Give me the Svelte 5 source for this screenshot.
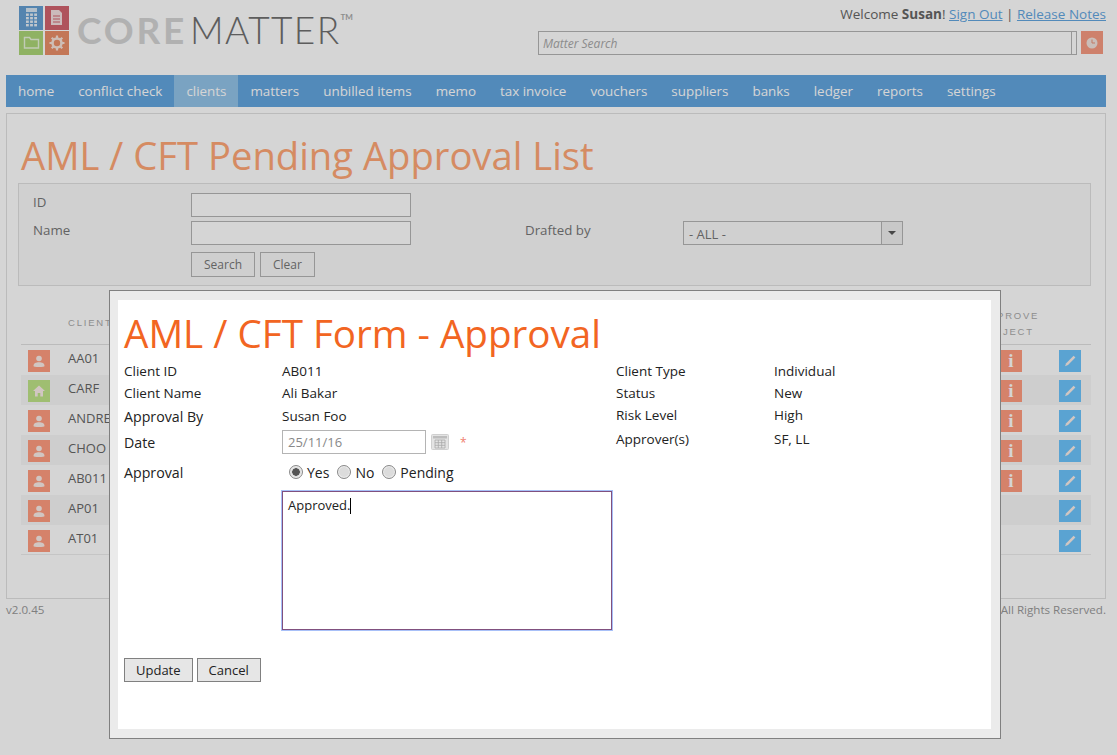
<script lang="ts">
  const navItems = ['home', 'conflict check', 'clients', 'matters', 'unbilled items', 'memo', 'tax invoice', 'vouchers', 'suppliers', 'banks', 'ledger', 'reports', 'settings']

  const clients = [
    { id: 'AA01', kind: 'person', info: true },
    { id: 'CARF', kind: 'company', info: true },
    { id: 'ANDREW', kind: 'person', info: true },
    { id: 'CHOO', kind: 'person', info: true },
    { id: 'AB011', kind: 'person', info: true },
    { id: 'AP01', kind: 'person', info: false },
    { id: 'AT01', kind: 'person', info: false }
  ]

  const approval = ['Yes', 'No', 'Pending']
</script>

<div class="page">
  <header class="top">
    <div class="logo">
      <svg class="logo-mark" width="50" height="49" viewBox="0 0 50 49" aria-hidden="true">
        <rect x="0" y="0" width="24" height="24" fill="#659fd2" />
        <rect x="7" y="2" width="11" height="4" fill="#d8e6f2" />
        <g fill="#e8eff6">
          <rect x="7" y="7.500" width="2.800" height="2.400" /><rect x="11.100" y="7.500" width="2.800" height="2.400" /><rect x="15.200" y="7.500" width="2.800" height="2.400" />
          <rect x="7" y="11" width="2.800" height="2.400" /><rect x="11.100" y="11" width="2.800" height="2.400" /><rect x="15.200" y="11" width="2.800" height="2.400" />
          <rect x="7" y="14.500" width="2.800" height="2.400" /><rect x="11.100" y="14.500" width="2.800" height="2.400" /><rect x="15.200" y="14.500" width="2.800" height="2.400" />
          <rect x="7" y="18" width="2.800" height="2.400" /><rect x="11.100" y="18" width="2.800" height="2.400" /><rect x="15.200" y="18" width="2.800" height="2.400" />
        </g>
        <rect x="26" y="0" width="24" height="24" fill="#d2646f" />
        <path d="M32 4h8l3 3v12H32z" fill="#f3dfe0" />
        <path d="M34 10h7M34 13h7M34 16h7" stroke="#d2646f" stroke-width="1.2" />
        <rect x="0" y="25" width="24" height="24" fill="#acd577" />
        <path d="M5.500 31.500h5l1.500 2h7.500v8.500h-14z" fill="none" stroke="#e8f3da" stroke-width="1.400" />
        <rect x="26" y="25" width="24" height="24" fill="#ea8f69" />
        <circle cx="38" cy="37" r="4.500" fill="none" stroke="#f7e4da" stroke-width="2.600" />
        <path d="M38 29.500v3M38 41.500v3M30.500 37h3M42.500 37h3M32.700 31.700l2.100 2.100M41.200 40.200l2.100 2.100M32.700 42.300l2.100-2.100M41.200 33.800l2.100-2.100" stroke="#f7e4da" stroke-width="2.200" />
      </svg>
      <div class="wordmark"><span class="core">CORE</span><span class="matter">MATTER</span><sup>TM</sup></div>
    </div>
    <div class="account">
      <div class="welcome">Welcome <b>Susan</b>! <a href="#signout">Sign Out</a> | <a href="#notes">Release Notes</a></div>
      <div class="search-row">
        <div class="matter-search">
          <input placeholder="Matter Search" />
          <span class="search-end"></span>
        </div>
        <button class="clock" aria-label="Recent matters">
          <svg width="12" height="12" viewBox="0 0 12 12"><circle cx="6" cy="6" r="5.500" fill="#f2e4de" /><path d="M6 2.500V6h3" fill="none" stroke="#e79178" stroke-width="1" /></svg>
        </button>
      </div>
    </div>
  </header>

  <nav class="nav">
    {#each navItems as item}
      <a href="#{item}" class:active={item === 'clients'}>{item}</a>
    {/each}
  </nav>

  <main class="panel">
    <h1>AML / CFT Pending Approval List</h1>
    <form class="filters">
      <div class="filter-grid">
        <label class="lbl-id" for="f-id">ID</label>
        <input id="f-id" class="txt" />
        <span></span><span></span><span></span>
        <label class="lbl-name" for="f-name">Name</label>
        <input id="f-name" class="txt" />
        <span></span>
        <label class="lbl-name" for="f-drafted">Drafted by</label>
        <div class="select" id="f-drafted">
          <span class="select-value">- ALL -</span>
          <span class="select-arrow"><i></i></span>
        </div>
      </div>
      <div class="filter-actions">
        <button type="button" class="btn">Search</button>
        <button type="button" class="btn">Clear</button>
      </div>
    </form>

    <div class="table">
      <div class="thead">
        <span class="col-client">CLIENT ID</span>
        <span class="col-approve">APPROVE<br />REJECT</span>
      </div>
      {#each clients as c, i}
        <div class="row" class:striped={i % 2 === 1}>
          <span class="tile" class:company={c.kind === 'company'}>
            {#if c.kind === 'person'}
              <svg width="14" height="14" viewBox="0 0 14 14"><circle cx="7" cy="4.500" r="2.800" /><path d="M1.500 12c0-3 2.500-3.800 5.500-3.800s5.500.8 5.500 3.800c0 .6-2 1-5.500 1s-5.500-.4-5.500-1z" /></svg>
            {:else}
              <svg width="14" height="14" viewBox="0 0 14 14"><path d="M7 1.500 13 7h-2v5.500H8.300V9H5.700v3.500H3V7H1z" /></svg>
            {/if}
          </span>
          <span class="client-id">{c.id}</span>
          <span class="cell-info">
            {#if c.info}
              <span class="tile info">i</span>
            {/if}
          </span>
          <span class="tile edit">
            <svg width="14" height="14" viewBox="0 0 14 14"><path d="M10.600 1.800 12.400 3.600 5 11 2 12.200 3.200 9.200z" /></svg>
          </span>
        </div>
      {/each}
    </div>
  </main>

  <footer class="foot">
    <span>v2.0.45</span>
    <span>Copyright &copy; 2016 CoreMatter. All Rights Reserved.</span>
  </footer>
</div>

<div class="overlay"></div>

<div class="dialog" role="dialog" aria-label="AML / CFT Form - Approval">
  <div class="dialog-body">
    <h2>AML / CFT Form - Approval</h2>
    <div class="form-cols">
      <div class="form-left">
        <div class="f-row r1"><span class="f-label">Client ID</span><span>AB011</span></div>
        <div class="f-row r2"><span class="f-label">Client Name</span><span>Ali Bakar</span></div>
        <div class="f-row r3"><span class="f-label big">Approval By</span><span>Susan Foo</span></div>
        <div class="f-row r4">
          <span class="f-label big">Date</span>
          <div class="date-wrap">
            <input class="date" value="25/11/16" />
            <svg class="cal" width="18" height="16" viewBox="0 0 18 16" aria-hidden="true">
              <rect x="0.500" y="0.500" width="17" height="15" rx="1" fill="#e4e4e4" stroke="#d0d0d0" />
              <rect x="2" y="2" width="14" height="2.500" fill="#bdbdbd" />
              <path d="M4 6h10v8H4zM4 8.700h10M4 11.300h10M7.300 6v8M10.700 6v8" fill="none" stroke="#a8a8a8" stroke-width="0.800" />
            </svg>
            <span class="req">*</span>
          </div>
        </div>
        <div class="f-row r5">
          <span class="f-label big">Approval</span>
          <div class="radios">
            {#each approval as a, i}
              <label><input type="radio" name="approval" checked={i === 0} />{a}</label>
            {/each}
          </div>
        </div>
        <div class="f-row r6">
          <span></span>
          <div class="notes" role="textbox">Approved.<span class="caret"></span></div>
        </div>
      </div>
      <div class="form-right">
        <div class="g-row"><span class="f-label">Client Type</span><span>Individual</span></div>
        <div class="g-row"><span class="f-label">Status</span><span>New</span></div>
        <div class="g-row"><span class="f-label">Risk Level</span><span>High</span></div>
        <div class="g-row"><span class="f-label">Approver(s)</span><span>SF, LL</span></div>
      </div>
    </div>
    <div class="dialog-actions">
      <button class="dlg-btn">Update</button>
      <button class="dlg-btn">Cancel</button>
    </div>
  </div>
</div>

<style>
  :global(body) {
    margin: 0;
    background: #fff;
    font-family: 'Open Sans', 'Liberation Sans', sans-serif;
    font-size: 13px;
    color: #555;
  }

  .page {
    width: 1117px;
    height: 755px;
    box-sizing: border-box;
    padding: 0 11px 0 6px;
    overflow: hidden;
  }

  .top {
    display: flex;
    justify-content: space-between;
    height: 75px;
  }

  .logo {
    display: flex;
    align-items: flex-start;
    gap: 8px;
    padding: 6px 0 0 13px;
  }

  .logo-mark {
    display: block;
  }

  .wordmark {
    display: flex;
    align-items: flex-start;
    margin-top: 2px;
    font-family: Lato, 'Open Sans', sans-serif;
    font-size: 37px;
    line-height: 44px;
    letter-spacing: 2.800px;
  }

  .core {
    font-weight: 700;
    color: #d4d4d4;
    margin-right: 3px;
  }

  .matter {
    font-weight: 300;
    color: #707070;
    letter-spacing: 1.400px;
  }

  sup {
    font-size: 8px;
    line-height: 10px;
    letter-spacing: 0;
    margin: 4px 0 0 0;
    color: #aaa;
    font-weight: 700;
  }

  .account {
    display: flex;
    flex-direction: column;
    align-items: flex-end;
  }

  .welcome {
    height: 31px;
    line-height: 28px;
    font-size: 13.500px;
    color: #666;
    white-space: nowrap;
  }

  .welcome a {
    color: #63a6df;
  }

  .search-row {
    display: flex;
    gap: 4px;
    margin-right: 3px;
  }

  .matter-search {
    display: flex;
    width: 539px;
    height: 24px;
    box-sizing: border-box;
    border: 1px solid #b4b4b4;
  }

  .matter-search input {
    flex: 1;
    min-width: 0;
    border: 0;
    padding: 1px 4px 0;
    background: transparent;
    font: italic 12px 'Open Sans', sans-serif;
    color: #777;
    outline: none;
  }

  .matter-search input::placeholder {
    color: #a8a8a8;
    opacity: 1;
  }

  .search-end {
    width: 4px;
    border-left: 1px solid #b4b4b4;
  }

  .clock {
    width: 22px;
    height: 23px;
    border: 0;
    padding: 0;
    background: #f79b82;
    display: flex;
    align-items: center;
    justify-content: center;
  }

  .nav {
    display: flex;
    height: 32px;
    background: #63a6df;
    font-size: 13.400px;
  }

  .nav a {
    padding: 0 12px;
    line-height: 32px;
    color: #fff;
    text-decoration: none;
    white-space: nowrap;
  }

  .nav a.active {
    background: #93c3e9;
  }

  .panel {
    margin-top: 6px;
    height: 486px;
    box-sizing: border-box;
    border: 1px solid #e0e0e0;
    padding: 0 14px 0 11px;
    background: #fff;
  }

  h1 {
    margin: 13px 0 0 3px;
    height: 56px;
    font-size: 38.200px;
    line-height: 56px;
    font-weight: 400;
    color: #ffa776;
    white-space: nowrap;
  }

  .filters {
    height: 103px;
    box-sizing: border-box;
    border: 1px solid #e0e0e0;
    background: #fafafa;
    padding: 9px 14px;
  }

  .filter-grid {
    display: grid;
    grid-template-columns: 158px 220px 114px 158px 220px;
    grid-auto-rows: 24px;
    row-gap: 4px;
    align-items: center;
  }

  .filter-grid label {
    color: #777;
    font-size: 13.300px;
    margin-top: -6px;
  }

  .txt {
    height: 24px;
    box-sizing: border-box;
    border: 1px solid #b4b4b4;
    background: #fff;
    padding: 0 4px;
  }

  .select {
    display: flex;
    height: 24px;
    box-sizing: border-box;
    border: 1px solid #b4b4b4;
    color: #777;
    line-height: 24px;
  }

  .select-value {
    flex: 1;
    padding-left: 5px;
  }

  .select-arrow {
    width: 20px;
    background: #f0f0f0;
    border-left: 1px solid #b4b4b4;
    display: flex;
    align-items: center;
    justify-content: center;
  }

  .select-arrow i {
    border: 4px solid transparent;
    border-top: 4px solid #555;
    border-bottom: 0;
  }

  .filter-actions {
    display: flex;
    gap: 5px;
    margin: 7px 0 0 158px;
  }

  .btn {
    height: 25px;
    padding: 0 12px;
    border: 1px solid #b4b4b4;
    background: #f8f8f8;
    font: 12px 'Open Sans', sans-serif;
    color: #777;
  }

  .table {
    margin: 15px 0 0 3px;
    width: 1070px;
  }

  .thead {
    display: flex;
    height: 44px;
    box-sizing: border-box;
    border-bottom: 1px solid #e0e0e0;
    font: 9.500px 'Liberation Sans', sans-serif;
    letter-spacing: 1.800px;
    color: #aaa;
    line-height: 16px;
  }

  .col-client {
    margin: 14px 0 0 47px;
  }

  .col-approve {
    margin: 7px 46px 0 auto;
    width: 70px;
    text-align: center;
  }

  .row {
    display: flex;
    align-items: flex-start;
    height: 30px;
    box-sizing: border-box;
    border-bottom: 1px solid transparent;
    padding: 5px 0 0 7px;
    font-size: 13px;
    color: #666;
  }

  .row:last-child {
    border-bottom-color: #ececec;
  }

  .striped {
    background: #f7f7f7;
  }

  .tile {
    width: 22px;
    height: 22px;
    flex: none;
    display: flex;
    align-items: center;
    justify-content: center;
    background: #ff9c7f;
    color: #fff;
  }

  .tile svg {
    fill: #fbeee9;
  }

  .tile.company {
    background: #bfe488;
  }

  .client-id {
    margin-left: 18px;
    margin-top: -1px;
    flex: 1;
  }

  .cell-info {
    width: 59px;
    height: 22px;
    flex: none;
  }

  .info {
    font: 700 19px 'Liberation Serif', serif;
  }

  .tile.edit {
    background: #6cc4fc;
    margin-right: 10px;
  }

  .foot {
    display: flex;
    justify-content: space-between;
    margin-top: 3px;
    font-size: 11.600px;
    color: #999;
  }

  .overlay {
    position: fixed;
    inset: 0;
    background: rgba(0, 0, 0, 0.165);
  }

  .dialog {
    position: fixed;
    left: 109px;
    top: 290px;
    width: 892px;
    height: 449px;
    box-sizing: border-box;
    padding: 9px 9px 9px 8px;
    border: 1px solid #808080;
    background: #ebebeb;
  }

  .dialog-body {
    height: 100%;
    box-sizing: border-box;
    padding: 10px 5px 0 6px;
    background: #fff;
    color: #222;
    font-size: 13.500px;
  }

  h2 {
    margin: 0;
    height: 50px;
    font-size: 38.600px;
    line-height: 46px;
    font-weight: 400;
    color: #f26522;
    white-space: nowrap;
  }

  .form-cols {
    display: flex;
    height: 298px;
  }

  .form-left {
    width: 492px;
  }

  .f-row,
  .g-row {
    display: grid;
    grid-template-columns: 158px 1fr;
    align-items: center;
  }

  .big {
    font-size: 14.200px;
  }

  .r1 { height: 22px; }
  .r2 { height: 22px; }
  .r3 { height: 24px; }
  .r4 { height: 28px; }
  .r5 { height: 32px; }
  .r6 { align-items: flex-start; margin-top: 3px; }

  .g-row {
    height: 22px;
  }

  .g-row:nth-child(4) {
    height: 26px;
  }

  .date-wrap {
    display: flex;
    align-items: center;
  }

  .date {
    width: 144px;
    height: 24px;
    box-sizing: border-box;
    border: 1px solid #b4b4b4;
    padding: 0 5px;
    font: 13px 'Open Sans', sans-serif;
    color: #888;
  }

  .cal {
    margin-left: 5px;
  }

  .req {
    margin-left: 11px;
    color: #f0806f;
    font-size: 12px;
  }

  .radios {
    display: flex;
    gap: 8px;
    padding-left: 7px;
    font-size: 14px;
  }

  .radios label {
    display: flex;
    align-items: center;
    gap: 4px;
  }

  .radios input {
    appearance: none;
    width: 14px;
    height: 14px;
    margin: 0;
    border-radius: 50%;
    border: 1px solid #8a8a8a;
    background: #dcdcdc;
    box-shadow: inset 0 0 0 1px #eee;
  }

  .radios input:checked {
    background: radial-gradient(circle, #555 0 3.500px, #dcdcdc 4px);
  }

  .notes {
    width: 330px;
    height: 139px;
    box-sizing: border-box;
    padding: 4px 5px;
    border: 1px solid #80507f;
    box-shadow: 0 0 0 1px #a8c0f8;
    font-size: 13px;
    line-height: 18px;
  }

  .caret {
    display: inline-block;
    width: 1px;
    height: 16px;
    background: #000;
    vertical-align: text-bottom;
  }

  .dialog-actions {
    display: flex;
    gap: 4px;
  }

  .dlg-btn {
    height: 24px;
    padding: 0 11px;
    border: 1px solid #808080;
    background: #e6e6e6;
    font: 13px 'Open Sans', sans-serif;
    color: #222;
  }
</style>
